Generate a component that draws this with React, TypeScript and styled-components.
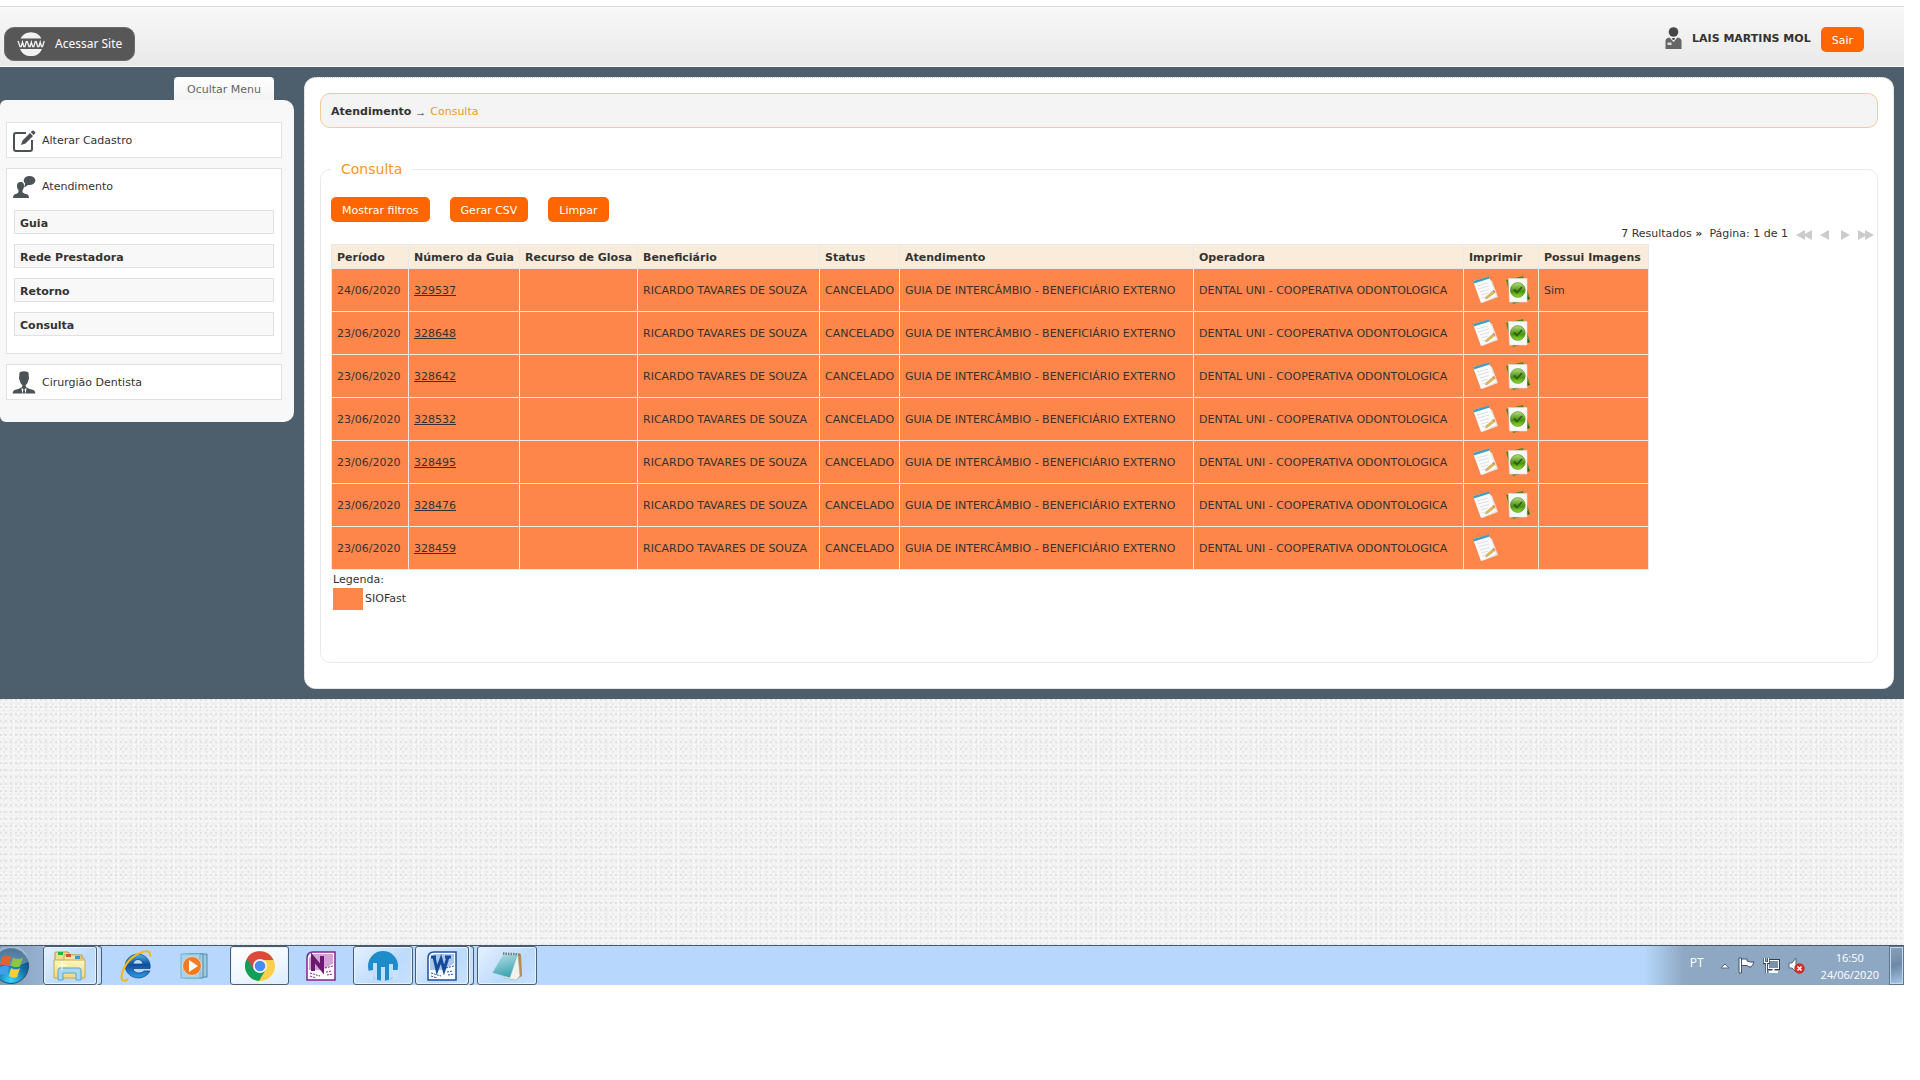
import React from 'react';
import styled, { createGlobalStyle, css } from 'styled-components';

const Global = createGlobalStyle`
  * { box-sizing: border-box; }
  body {
    margin: 0;
    background: #fff;
    color: #333;
    font: 11px/16px Verdana, "DejaVu Sans", sans-serif;
  }
  button { font: inherit; border: 0; padding: 0; cursor: pointer; }
  a { color: inherit; }
  ul { list-style: none; margin: 0; padding: 0; }
  svg { display: block; flex: none; }
`;

const Screen = styled.div`
  padding: 6px 16px 0 0;
`;

const Header = styled.header`
  display: flex;
  justify-content: space-between;
  align-items: flex-start;
  height: 61px;
  padding: 20px 40px 0 4px;
  border-top: 1px solid #dcdcdc;
  border-bottom: 1px solid #fff;
  background: linear-gradient(#f8f8f8, #e9e9e9);
`;

const SiteLink = styled.a`
  display: flex;
  align-items: center;
  gap: 10px;
  height: 34px;
  width: 131px;
  padding-left: 12px;
  border: 1px solid #6d6d6d;
  border-radius: 10px;
  background: #575757;
  color: #fff;
  font: 12px/16px "Noto Sans", sans-serif;
  text-decoration: none;
  white-space: nowrap;
`;

const User = styled.div`
  display: flex;
  gap: 10px;
`;

const UserName = styled.strong`
  line-height: 24px;
`;

const OrangeButton = styled.button`
  height: 25px;
  padding: 2px 11px 0;
  border-radius: 5px;
  background: #f60;
  color: #fff;
  white-space: nowrap;
`;

const Body = styled.div`
  display: flex;
  align-items: flex-start;
  gap: 10px;
  padding: 10px 10px 10px 0;
  background: #4d5f6c;
`;

const Sidebar = styled.aside`
  flex: none;
  width: 294px;
`;

const HideMenu = styled.button`
  display: block;
  width: 100px;
  height: 23px;
  margin-left: 174px;
  padding-top: 2px;
  border-radius: 4px 4px 0 0;
  background: linear-gradient(#fff, #f3f3f3);
  color: #666;
`;

const MenuPanel = styled.nav`
  padding: 22px 12px 22px 6px;
  border-radius: 6px 10px 10px 6px;
  background: #f8f8f8;
`;

const Menu = styled.ul`
  display: flex;
  flex-direction: column;
  gap: 10px;
`;

const MenuItem = styled.li`
  border: 1px solid #e1e1e1;
  background: #fff;
`;

const MenuLink = styled.a`
  display: flex;
  align-items: center;
  gap: 6px;
  height: 34px;
  padding: 2px 6px 0 5px;
  text-decoration: none;
`;

const SubMenu = styled.ul`
  display: flex;
  flex-direction: column;
  gap: 10px;
  padding: 7px 7px 17px;
`;

const SubLink = styled.a`
  display: block;
  height: 24px;
  padding: 5px 5px 0;
  border: 1px solid #e1e1e1;
  background: #f8f8f8;
  font-weight: bold;
  text-decoration: none;
`;

const Main = styled.main`
  flex: 1;
  min-width: 0;
  padding: 15px 15px 25px;
  border: 1px dotted #ccc;
  border-radius: 12px;
  background: #fff;
`;

const Breadcrumb = styled.nav`
  display: flex;
  align-items: center;
  gap: 4px;
  height: 35px;
  padding: 2px 10px 0;
  border: 1px solid #f6cb93;
  border-radius: 10px;
  background: #f4f4f4;
`;

const Separator = styled.span`
  font-family: "Liberation Sans", Arial, sans-serif;
`;

const Current = styled.span`
  color: #f7971d;
`;

const Panel = styled.fieldset`
  min-width: 0;
  margin: 32px 0 0;
  padding: 19px 3px 52px 10px;
  border: 1px solid #e9e9e9;
  border-radius: 10px;
`;

const PanelTitle = styled.legend`
  padding: 0 10px;
  color: #f7971d;
  font-size: 14px;
  line-height: 18px;
`;

const Actions = styled.div`
  display: flex;
  gap: 20px;
`;

const Pager = styled.div`
  display: flex;
  justify-content: flex-end;
  align-items: center;
  gap: 8px;
  height: 22px;
  padding-top: 2px;
`;

const PagerButtons = styled.div`
  display: flex;
  gap: 6px;
  padding-top: 2px;
`;

const PagerButton = styled.button`
  background: none;
  color: #ccc;
`;

const Table = styled.table`
  table-layout: fixed;
  width: 1318px;
  border-collapse: collapse;
  white-space: nowrap;
`;

const Col = styled.col<{ $w: number }>`
  width: ${(p) => p.$w}px;
`;

const Th = styled.th`
  height: 24px;
  padding: 2px 5px 0;
  border: 1px solid #e9e9e9;
  background: #faecda;
  text-align: left;
`;

const Td = styled.td`
  height: 43px;
  padding: 2px 5px 0;
  border: 1px solid #e9e9e9;
  background: #ff864a;
`;

const PrintActions = styled.div`
  display: flex;
  gap: 7px;
  padding: 0 0 2px 3px;
`;

const IconButton = styled.button`
  background: none;
`;

const Key = styled.div`
  padding: 2px 2px 0;
`;

const KeyRow = styled.div`
  display: flex;
  align-items: center;
  gap: 2px;
`;

const Swatch = styled.span`
  width: 30px;
  height: 22px;
  background: #ff864a;
`;

const Backdrop = styled.div`
  height: 246px;
  background-color: #f2f2f2;
  background-image:
    radial-gradient(circle at 1px 1px, #e2e2e2 1px, transparent 1px),
    radial-gradient(circle at 4px 5px, #e8e8e8 1px, transparent 1px),
    radial-gradient(circle at 2px 2px, #f8f8f8 1px, transparent 1px);
  background-size: 5px 7px, 7px 6px, 4px 4px;
`;

const Taskbar = styled.footer`
  display: flex;
  align-items: stretch;
  height: 40px;
  border-top: 1px solid #46586c;
  background: #b7d8fc;
`;

const Start = styled.button`
  display: flex;
  align-items: center;
  width: 43px;
  overflow: hidden;
  background: linear-gradient(90deg, #809bb9, #98b3d2);
`;

const TaskButton = styled.button<{ $w: number; $open?: boolean; $active?: boolean }>`
  display: flex;
  align-items: center;
  justify-content: center;
  width: ${(p) => p.$w}px;
  border: 1px solid transparent;
  border-radius: 3px;
  background: none;
  ${(p) =>
    p.$open &&
    css`
      border-color: #4b5d73;
      background: linear-gradient(135deg, #e6f1ff, #bcdafc 60%, #c9e2fd);
      box-shadow: inset 0 0 0 1px #e4f1ff;
    `}
  ${(p) => p.$active && css`background: linear-gradient(160deg, #fff, #eef6ff 60%, #d9ebff);`}
`;

const StackEdge = styled.span`
  width: 5px;
  border: 1px solid #4b5d73;
  border-left-color: #e4f1ff;
  border-radius: 0 3px 3px 0;
  background: #c5dffc;
`;

const Gap = styled.span<{ $w: number }>`
  width: ${(p) => p.$w}px;
`;

const Tray = styled.div`
  display: flex;
  align-items: center;
  gap: 8px;
  margin-left: auto;
  padding: 0 10px 0 46px;
  background: linear-gradient(90deg, #b7d8fc, #8ea8c3 40px);
  color: #fff;
  font: 12px/17px "Open Sans", "Noto Sans", sans-serif;
`;

const Lang = styled.span`
  padding: 0 8px 6px 0;
`;

const Clock = styled.time`
  padding-left: 8px;
  font-size: 11px;
  text-align: center;
`;

const ShowDesktop = styled.button`
  width: 15px;
  border: 1px solid #5d7690;
  box-shadow: inset 0 0 0 1px #c4d9ee;
  background: linear-gradient(160deg, #8aa2ba, #6e8aa6 50%, #a8c8ea);
`;

const WwwIcon = () => (
  <svg width="28" height="24" viewBox="0 0 28 24" aria-hidden="true">
    <path d="M3.500 6.500a12 12 0 0 1 21 0z M3 17a12 12 0 0 0 22 0z" fill="#f2f2f2" />
    <path d="M1 9l2 5.500h1.200L5.500 10l1.300 4.500H8L9.500 9M10 9l2 5.500h1L14.300 10l1.300 4.500h1.200L18.500 9M19 9l1.700 5.500h1.200L23.200 10l1.300 4.500h1L27.300 9" fill="none" stroke="#f2f2f2" strokeWidth="1.300" />
  </svg>
);

const UserIcon = () => (
  <svg width="17" height="22" viewBox="0 0 17 22" aria-hidden="true">
    <circle cx="8.500" cy="5" r="4.800" fill="#474747" />
    <path d="M0.500 22v-8q0-3 4-3.500L8.500 15l4-4.500q4 .5 4 3.500v8z" fill="#666" />
    <path d="M7 11h3l-.7 2h-1.600z" fill="#474747" />
    <rect x="2.500" y="15.500" width="4" height="2.500" fill="#ddd" />
  </svg>
);

const EditIcon = () => (
  <svg width="24" height="24" viewBox="0 0 24 24" aria-hidden="true">
    <path d="M14 4H4Q2 4 2 6v14q0 2 2 2h14q2 0 2-2v-9" fill="none" stroke="#4b5356" strokeWidth="2" />
    <path d="M9 16l1.500-4.500 7.500-7.500 3 3-7.500 7.500z M18.700 3.300l1.500-1.500q.8-.8 1.600 0l1.200 1.200q.8.8 0 1.600l-1.400 1.500z" fill="#4b5356" />
  </svg>
);

const TalkIcon = () => (
  <svg width="24" height="24" viewBox="0 0 24 24" aria-hidden="true">
    <ellipse cx="17.500" cy="5.500" rx="5.800" ry="4.500" fill="#4b5356" />
    <path d="M13.500 7.500l-1.500 5 5-3z" fill="#4b5356" />
    <path d="M8.500 7c3 0 3.700 2 3.500 4.500-.2 2-1 3-1.500 3.800v2q1 1.500 5 2.200 1.500.5 1.500 3.500H1q0-3 1.500-3.500 3-.7 4-2.200v-2C5.500 14 5 13 5 11c0-2.500 1-4 3.500-4z" fill="#4b5356" />
  </svg>
);

const DoctorIcon = () => (
  <svg width="24" height="24" viewBox="0 0 24 24" aria-hidden="true">
    <path d="M7.500 1.500Q12-1 16.500 1.500l.5 6-1.500 4.500-2 2.500 1 2q3 1.500 7 2.500 1.500.5 2 3.500H.5q.5-3 2-3.500 4-1 7-2.500l1-2-2-2.500L7 7.500z" fill="#4b5356" />
    <path d="M10 17l1.500 1.500L10.500 22l1.500 2 1.500-2-1-3.500L14 17l.5 1-1 5h-3l-1-5z" fill="#fff" />
  </svg>
);

const ArrowIcon = ({ back, double }: { back?: boolean; double?: boolean }) => (
  <svg width={double ? 16 : 14} height="10" viewBox={double ? '0 0 16 10' : '-3 0 14 10'} aria-hidden="true">
    <g fill="currentColor" transform={back ? (double ? 'translate(16) scale(-1 1)' : 'translate(8) scale(-1 1)') : undefined}>
      <path d="M0 0l9 5-9 5z" />
      {double && <path d="M7 0l9 5-9 5z" />}
    </g>
  </svg>
);

const NoteIcon = () => (
  <svg width="27" height="28" viewBox="0 0 27 28" aria-hidden="true">
    <path d="M17 3l3 2 6 16-16 6z" fill="#e4e4e4" />
    <path d="M1 5L17 1l7 19-15 7z" fill="#fbfbfb" />
    <path d="M1 5L17 .5l.8 2L1.800 7.500z" fill="#3d9fc0" />
    <path d="M5 10l11-3M6 13l11-3M8 16l9-2.500M9 19l7-2M10 22l4-1" stroke="#dcdfe2" />
    <path d="M13.500 23l1-2.500 7-6 1.500 2-7 5.500z" fill="#e3bb55" stroke="#a7802f" strokeWidth=".4" />
    <path d="M20.500 15l1.200-1 1.700 1.800-1 1z" fill="#c98a9a" />
  </svg>
);

const CheckPageIcon = () => (
  <svg width="24" height="28" viewBox="0 0 24 28" aria-hidden="true">
    <defs>
      <linearGradient id="seal" x1="0" y1="0" x2="0" y2="1">
        <stop offset="0" stopColor="#b5df80" />
        <stop offset=".45" stopColor="#5f9f26" />
        <stop offset=".6" stopColor="#4c9410" />
        <stop offset="1" stopColor="#93dc30" />
      </linearGradient>
    </defs>
    <path d="M0 4L17 0l7 23-17 5z" fill="#4c8a1c" />
    <path d="M20 18l4 5-5 1z" fill="#2f5f10" />
    <path d="M2.500 2.500h18.500v23.500H3.500z" fill="#f8f8f8" stroke="#e0e0e0" strokeWidth=".6" />
    <circle cx="11.800" cy="14" r="7.400" fill="url(#seal)" stroke="#4b8a17" strokeWidth=".6" />
    <path d="M8 13.500l3 3 5-5.500" fill="none" stroke="#2d5f14" strokeWidth="1.800" />
  </svg>
);

const StartIcon = () => (
  <svg width="30" height="38" viewBox="0 0 30 38" aria-hidden="true">
    <defs>
      <radialGradient id="orb" cx=".5" cy=".9" r=".9">
        <stop offset="0" stopColor="#35d8ff" />
        <stop offset=".5" stopColor="#166ea8" />
        <stop offset="1" stopColor="#0f3a66" />
      </radialGradient>
    </defs>
    <circle cx="11" cy="19" r="17.500" fill="url(#orb)" stroke="#264c70" />
    <path d="M-6 15a17 17 0 0 1 34 0q-17 8-34 0z" fill="#cfe3f2" opacity=".35" />
    <path d="M2 10q5-3 9 0l-2 9q-4-3-9 0z" fill="#e8602c" />
    <path d="M13 10.500q5 3 10 0l-3 9q-5 2-9-1z" fill="#8fc640" />
    <path d="M0 20q5-3 9 0l-2 9q-4-3-9 0z" fill="#3f9fe8" />
    <path d="M11 21q5 3 9 0l-3 9q-4 2-8-1z" fill="#fdd03a" />
  </svg>
);

const FolderIcon = () => (
  <svg width="34" height="30" viewBox="0 0 34 30" aria-hidden="true">
    <defs>
      <linearGradient id="folder" x1="0" y1="0" x2="0" y2="1">
        <stop offset="0" stopColor="#fdf6c4" />
        <stop offset="1" stopColor="#eed878" />
      </linearGradient>
    </defs>
    <path d="M2 2q0-1 1-1h12l2 3h12v20H2z" fill="#f0dc8e" stroke="#b99a41" />
    <rect x="5" y="1" width="5" height="3" fill="#1fb83e" />
    <path d="M11 4h13l2 3h5v18H11z" fill="#f6e7a6" stroke="#c8a94e" />
    <rect x="13" y="3" width="5" height="3" fill="#d9532c" />
    <rect x="22" y="5" width="5" height="3" fill="#3b95e0" />
    <path d="M1 9h31v18H1z" fill="url(#folder)" stroke="#c8a94e" />
    <path d="M5 29V19q0-2 2-2h19q2 0 2 2v10h-5v-7H10v7z" fill="#a9d9f0" stroke="#5aa5cc" />
    <path d="M9 10v9M5 14.500h9" stroke="#fff" />
  </svg>
);

const ExplorerIcon = () => (
  <svg width="34" height="32" viewBox="0 0 34 32" aria-hidden="true">
    <defs>
      <linearGradient id="ie" x1="0" y1="0" x2="0" y2="1">
        <stop offset="0" stopColor="#4fb0ea" />
        <stop offset=".45" stopColor="#0f4f9c" />
        <stop offset="1" stopColor="#2f9be6" />
      </linearGradient>
    </defs>
    <path d="M18 4a12.500 12.500 0 0 1 13 14.500H14q1 4.500 6 4.500 3.500 0 5-2h6a13 12 0 1 1-13-17zM14 14h10q-1-4.500-5-4.500T14 14z" fill="url(#ie)" stroke="#0c3f7c" strokeWidth=".7" />
    <path d="M9 29.500Q2 33 2.500 26 6 9 23 2q9-3 8 4.500" fill="none" stroke="#f2b91c" strokeWidth="2" />
  </svg>
);

const MediaIcon = () => (
  <svg width="32" height="30" viewBox="0 0 32 30" aria-hidden="true">
    <path d="M8 3h19v23H8z" fill="#9cc9de" stroke="#4e8cab" />
    <path d="M5 3h18v24H5z" fill="#a3d0e4" stroke="#4a8bad" />
    <path d="M1 3h19v24H1z" fill="#a5d3e8" stroke="#7db4ce" />
    <circle cx="12" cy="15" r="9.500" fill="#f47b20" stroke="#d8dde0" />
    <path d="M9 9l9 6-9 6z" fill="#fff" />
  </svg>
);

const ChromeIcon = () => (
  <svg width="30" height="30" viewBox="0 0 30 30" aria-hidden="true">
    <circle cx="15" cy="15" r="15" fill="#fdd04b" />
    <path d="M15 15L2 7.500A15 15 0 0 0 14 30l7-12z" fill="#139d5b" />
    <path d="M2 7.500A15 15 0 0 1 28.500 9H15L8.500 18z" fill="#db4a3d" />
    <circle cx="15" cy="15" r="7" fill="#f4f4f4" />
    <circle cx="15" cy="15" r="5.300" fill="#4a8af4" />
  </svg>
);

const OfficeIcon = ({ word }: { word?: boolean }) => {
  const c = word ? '#1c4fa0' : '#8a1f8c';
  return (
    <svg width="30" height="30" viewBox="0 0 30 30" aria-hidden="true">
      <path d="M7 1h22v28H1V7z" fill="#fff" />
      <path d="M7 3h20v16H3V7z" fill={word ? '#a9c8ec' : '#d6a3d8'} />
      <path d="M7 1h22v28H1V7q0-6 6-6z" fill="none" stroke={c} strokeWidth="1.500" />
      <path d="M2 20l14-1 12-7v16H2z" fill="#fff" />
      <path d="M4 22l10 3M4 25l6 2M19 17l8-2M20 21l6-1M21 24l6-1" stroke={c} strokeWidth="1" strokeDasharray="2 1" />
      {word ? (
        <path d="M4 6h5M7 6l3 13 4-11 3 11 4-13M18 6h6" fill="none" stroke="#164b9c" strokeWidth="3" />
      ) : (
        <path d="M7 20V7l9 11V5" fill="none" stroke="#6b1a70" strokeWidth="4" />
      )}
    </svg>
  );
};

const MIcon = () => (
  <svg width="30" height="30" viewBox="0 0 30 30" aria-hidden="true">
    <circle cx="15" cy="15" r="15" fill="#1c8ccb" />
    <path d="M5 12h4v17l-4-3zM13 16h4v14h-4zM21 13h4v13l-4 3z" fill="#c4dffc" />
    <path d="M0 20l5-1v9H0zM25 19h5v9h-5z" fill="#c9e2fd" />
  </svg>
);

const NotepadIcon = () => (
  <svg width="32" height="30" viewBox="0 0 32 30" aria-hidden="true">
    <defs>
      <linearGradient id="pad" x1="0" y1="0" x2=".3" y2="1">
        <stop offset="0" stopColor="#b9e2e6" />
        <stop offset="1" stopColor="#3fa3b3" />
      </linearGradient>
    </defs>
    <path d="M27 3h3l1 22-5 3z" fill="#b58c49" />
    <path d="M27 4l2 21-4 4-12-2z" fill="#f2f2ec" stroke="#aaa" strokeWidth=".6" />
    <path d="M12 3l15 1-8 23-18-5z" fill="url(#pad)" stroke="#d5eef1" strokeWidth=".6" />
    <path d="M12 2.500l17 1" stroke="#777" strokeWidth="2.500" strokeDasharray="1.500 1" />
  </svg>
);

const UpIcon = () => (
  <svg width="10" height="8" viewBox="0 0 10 8" aria-hidden="true">
    <path d="M1 6l4-4 4 4z" fill="#fff" stroke="#54687d" />
  </svg>
);

const FlagIcon = () => (
  <svg width="17" height="17" viewBox="0 0 17 17" aria-hidden="true">
    <path d="M3.500 2h5.500v2q3 1.500 7 1-1 3-3 5-2 .5-4-1.500H3.500z" fill="#fff" stroke="#42546a" />
    <path d="M1 1h2.500v15H1z" fill="#fff" stroke="#42546a" />
  </svg>
);

const NetworkIcon = () => (
  <svg width="17" height="17" viewBox="0 0 17 17" aria-hidden="true">
    <rect x="4.500" y="2.500" width="12" height="10" fill="#6c839b" stroke="#2e3e50" />
    <rect x="5.500" y="3.500" width="10" height="8" fill="#7a92ab" stroke="#fff" />
    <path d="M6 15h9M10.500 12v3" stroke="#fff" strokeWidth="2" />
    <path d="M1.500 1v5h4V1M3.500 6v10" fill="none" stroke="#2e3e50" strokeWidth="2.500" />
    <path d="M1.500 1v4.500h4V1M3.500 6v10" fill="none" stroke="#fff" strokeWidth="1.200" />
  </svg>
);

const MutedIcon = () => (
  <svg width="17" height="17" viewBox="0 0 17 17" aria-hidden="true">
    <path d="M1 6h3l4-5v14l-4-4H1z" fill="#fff" stroke="#56697d" />
    <circle cx="11.500" cy="11.500" r="4.800" fill="#e02b20" stroke="#a81811" strokeWidth=".6" />
    <path d="M9.500 9.500l4 4M13.500 9.500l-4 4" stroke="#fff" strokeWidth="1.600" />
  </svg>
);

const columns = [
  { title: 'Período', width: 77 },
  { title: 'Número da Guia', width: 111 },
  { title: 'Recurso de Glosa', width: 118 },
  { title: 'Beneficiário', width: 182 },
  { title: 'Status', width: 80 },
  { title: 'Atendimento', width: 294 },
  { title: 'Operadora', width: 270 },
  { title: 'Imprimir', width: 75 },
  { title: 'Possui Imagens', width: 110 },
];

const rows = [
  { date: '24/06/2020', guide: '329537', checked: true, images: 'Sim' },
  { date: '23/06/2020', guide: '328648', checked: true, images: '' },
  { date: '23/06/2020', guide: '328642', checked: true, images: '' },
  { date: '23/06/2020', guide: '328532', checked: true, images: '' },
  { date: '23/06/2020', guide: '328495', checked: true, images: '' },
  { date: '23/06/2020', guide: '328476', checked: true, images: '' },
  { date: '23/06/2020', guide: '328459', checked: false, images: '' },
];

const subItems = ['Guia', 'Rede Prestadora', 'Retorno', 'Consulta'];

export default function App() {
  return (
    <Screen>
      <Global />
      <Header>
        <SiteLink href="#"><WwwIcon />Acessar Site</SiteLink>
        <User>
          <UserIcon />
          <UserName>LAIS MARTINS MOL</UserName>
          <OrangeButton>Sair</OrangeButton>
        </User>
      </Header>

      <Body>
        <Sidebar>
          <HideMenu>Ocultar Menu</HideMenu>
          <MenuPanel>
            <Menu>
              <MenuItem><MenuLink href="#"><EditIcon />Alterar Cadastro</MenuLink></MenuItem>
              <MenuItem>
                <MenuLink href="#"><TalkIcon />Atendimento</MenuLink>
                <SubMenu>
                  {subItems.map((s) => <li key={s}><SubLink href="#">{s}</SubLink></li>)}
                </SubMenu>
              </MenuItem>
              <MenuItem><MenuLink href="#"><DoctorIcon />Cirurgião Dentista</MenuLink></MenuItem>
            </Menu>
          </MenuPanel>
        </Sidebar>

        <Main>
          <Breadcrumb>
            <strong>Atendimento</strong>
            <Separator>→</Separator>
            <Current>Consulta</Current>
          </Breadcrumb>
          <Panel>
            <PanelTitle>Consulta</PanelTitle>
            <Actions>
              <OrangeButton>Mostrar filtros</OrangeButton>
              <OrangeButton>Gerar CSV</OrangeButton>
              <OrangeButton>Limpar</OrangeButton>
            </Actions>
            <Pager>
              <span>7 Resultados <b>»</b>&nbsp; Página: 1 de 1</span>
              <PagerButtons>
                <PagerButton aria-label="Primeira página"><ArrowIcon back double /></PagerButton>
                <PagerButton aria-label="Página anterior"><ArrowIcon back /></PagerButton>
                <PagerButton aria-label="Próxima página"><ArrowIcon /></PagerButton>
                <PagerButton aria-label="Última página"><ArrowIcon double /></PagerButton>
              </PagerButtons>
            </Pager>
            <Table>
              <colgroup>{columns.map((c) => <Col key={c.title} $w={c.width} />)}</colgroup>
              <thead>
                <tr>{columns.map((c) => <Th key={c.title} scope="col">{c.title}</Th>)}</tr>
              </thead>
              <tbody>
                {rows.map((r) => (
                  <tr key={r.guide}>
                    <Td>{r.date}</Td>
                    <Td><a href="#">{r.guide}</a></Td>
                    <Td />
                    <Td>RICARDO TAVARES DE SOUZA</Td>
                    <Td>CANCELADO</Td>
                    <Td>GUIA DE INTERCÂMBIO - BENEFICIÁRIO EXTERNO</Td>
                    <Td>DENTAL UNI - COOPERATIVA ODONTOLOGICA</Td>
                    <Td>
                      <PrintActions>
                        <IconButton aria-label="Imprimir guia"><NoteIcon /></IconButton>
                        {r.checked && <IconButton aria-label="Imprimir comprovante"><CheckPageIcon /></IconButton>}
                      </PrintActions>
                    </Td>
                    <Td>{r.images}</Td>
                  </tr>
                ))}
              </tbody>
            </Table>
            <Key>
              Legenda:
              <KeyRow><Swatch />SIOFast</KeyRow>
            </Key>
          </Panel>
        </Main>
      </Body>

      <Backdrop />

      <Taskbar>
        <Start aria-label="Iniciar"><StartIcon /></Start>
        <TaskButton $w={54} $open aria-label="Windows Explorer"><FolderIcon /></TaskButton>
        <StackEdge />
        <Gap $w={4} />
        <TaskButton $w={60} aria-label="Internet Explorer"><ExplorerIcon /></TaskButton>
        <TaskButton $w={60} aria-label="Windows Media Player"><MediaIcon /></TaskButton>
        <Gap $w={4} />
        <TaskButton $w={59} $open $active aria-label="Google Chrome"><ChromeIcon /></TaskButton>
        <Gap $w={4} />
        <TaskButton $w={56} aria-label="OneNote"><OfficeIcon /></TaskButton>
        <Gap $w={4} />
        <TaskButton $w={60} $open aria-label="Aplicativo"><MIcon /></TaskButton>
        <Gap $w={2} />
        <TaskButton $w={54} $open aria-label="Word"><OfficeIcon word /></TaskButton>
        <StackEdge />
        <Gap $w={3} />
        <TaskButton $w={60} $open aria-label="Bloco de notas"><NotepadIcon /></TaskButton>
        <Tray>
          <Lang>PT</Lang>
          <UpIcon />
          <FlagIcon />
          <NetworkIcon />
          <MutedIcon />
          <Clock>16:50<br />24/06/2020</Clock>
        </Tray>
        <ShowDesktop aria-label="Mostrar área de trabalho" />
      </Taskbar>
    </Screen>
  );
}
